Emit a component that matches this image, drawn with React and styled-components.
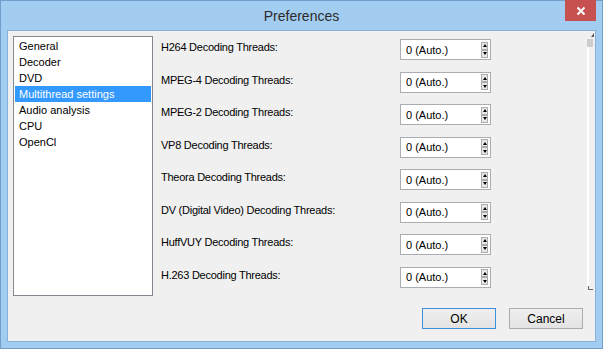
import React from 'react'
import styled, { createGlobalStyle } from 'styled-components'

const GlobalStyle = createGlobalStyle`
  html, body {
    margin: 0;
    padding: 0;
    overflow: hidden;
    background: #a3cdf0;
  }
  body {
    font-family: "Liberation Sans", Arial, sans-serif;
  }
`

const categories = ['General', 'Decoder', 'DVD', 'Multithread settings', 'Audio analysis', 'CPU', 'OpenCl']

const threads = [
  'H264 Decoding Threads:',
  'MPEG-4 Decoding Threads:',
  'MPEG-2 Decoding Threads:',
  'VP8 Decoding Threads:',
  'Theora Decoding Threads:',
  'DV (Digital Video) Decoding Threads:',
  'HuffVUY Decoding Threads:',
  'H.263 Decoding Threads:',
]

const Preferences = () => {
  return (
    <Window>
      <TitleBar>
        Preferences
        <CloseButton>
          <svg width="10" height="10" viewBox="0 0 10 10">
            <path d="M1.5 1.5 L8.5 8.5 M8.5 1.5 L1.5 8.5" stroke="#fff" strokeWidth="2" />
          </svg>
        </CloseButton>
      </TitleBar>
      <Client>
        <Main>
          <CategoryList>
            {categories.map(c => (
              <CategoryItem key={c} selected={c === 'Multithread settings'}>{c}</CategoryItem>
            ))}
          </CategoryList>
          <ScrollPane>
            <Rows>
              {threads.map(t => (
                <Row key={t}>
                  <Label>{t}</Label>
                  <Spinner>
                    <SpinValue>0 (Auto.)</SpinValue>
                    <SpinButtons>
                      <SpinButton up />
                      <SpinButton />
                    </SpinButtons>
                  </Spinner>
                </Row>
              ))}
            </Rows>
            <ScrollBar>
              <ScrollArrow />
              <ScrollThumb />
              <ScrollTrack />
              <ScrollGrip />
            </ScrollBar>
          </ScrollPane>
        </Main>
        <Footer>
          <DialogButton primary>OK</DialogButton>
          <DialogButton>Cancel</DialogButton>
        </Footer>
      </Client>
    </Window>
  )
}

const Window = styled.div`
  width: 603px;
  height: 349px;
  box-sizing: border-box;
  border: 1px solid #6f9fcb;
  background: #a3cdf0;
  padding: 0 6px 6px;
  display: flex;
  flex-direction: column;
`

const TitleBar = styled.div`
  position: relative;
  height: 29px;
  display: flex;
  align-items: center;
  justify-content: center;
  font-size: 14px;
  color: #2a2a2a;
`

const CloseButton = styled.div`
  position: absolute;
  top: -1px;
  right: 0;
  width: 31px;
  height: 21px;
  background: #c75050;
  display: flex;
  align-items: center;
  justify-content: center;
`

const Client = styled.div`
  flex: 1;
  border: 1px solid #86b2da;
  background: #f0f0f0;
  display: flex;
  flex-direction: column;
  font-size: 11px;
  color: #000;
`

const Main = styled.div`
  display: flex;
  height: 265px;
  padding-left: 5px;
`

const CategoryList = styled.div`
  width: 140px;
  height: 260px;
  margin-top: 5px;
  box-sizing: border-box;
  border: 1px solid #828790;
  background: #fff;
  padding: 1px 1px 0 1px;
`

const CategoryItem = styled.div`
  height: 16px;
  line-height: 16px;
  padding-left: 4px;
  white-space: nowrap;
  background: ${p => (p.selected ? '#3399ff' : 'transparent')};
  color: ${p => (p.selected ? '#fff' : '#000')};
`

const ScrollPane = styled.div`
  flex: 1;
  display: flex;
  padding-left: 8px;
`

const Rows = styled.div`
  flex: 1;
  padding-top: 8px;
`

const Row = styled.div`
  height: 32.57px;
  display: grid;
  grid-template-columns: 239px 91px;
  align-items: start;
`

const Label = styled.div`
  padding-top: 1px;
  line-height: 14px;
  letter-spacing: -0.25px;
  white-space: nowrap;
`

const Spinner = styled.div`
  width: 91px;
  height: 21px;
  box-sizing: border-box;
  border: 1px solid #abadb3;
  background: #fff;
  display: flex;
  align-items: center;
  justify-content: space-between;
  padding: 0 1px 0 5px;
`

const SpinValue = styled.span`
  line-height: 14px;
`

const SpinButtons = styled.div`
  display: flex;
  flex-direction: column;
  margin-right: 1px;
`

const SpinButton = styled.div`
  width: 7px;
  height: 8px;
  box-sizing: border-box;
  border: 1px solid #acacac;
  background: #e8e8e8;
  display: flex;
  align-items: center;
  justify-content: center;
  &::after {
    content: '';
    border-left: 2.5px solid transparent;
    border-right: 2.5px solid transparent;
    ${p => (p.up ? 'border-bottom: 3px solid #000;' : 'border-top: 3px solid #000;')}
  }
`

const ScrollBar = styled.div`
  width: 7px;
  margin-right: 1px;
  padding-top: 2px;
  display: flex;
  flex-direction: column;
  align-items: flex-start;
`

const ScrollArrow = styled.div`
  align-self: flex-end;
  width: 0;
  height: 0;
  border-left: 3px solid transparent;
  border-bottom: 4px solid #555;
  margin-bottom: 2px;
`

const ScrollThumb = styled.div`
  width: 6px;
  height: 8px;
  background: #cdcdcd;
`

const ScrollTrack = styled.div`
  width: 2px;
  height: 239px;
  background: #fff;
`

const ScrollGrip = styled.div`
  width: 4px;
  height: 3px;
  margin-left: 1px;
  border-left: 1px solid #666;
  border-bottom: 1px solid #666;
`

const Footer = styled.div`
  display: flex;
  justify-content: flex-end;
  gap: 13px;
  padding: 12px 12px 0 0;
`

const DialogButton = styled.div`
  width: 74px;
  height: 21px;
  box-sizing: border-box;
  border: 1px solid ${p => (p.primary ? '#3c8fe0' : '#acacac')};
  background: linear-gradient(#efefef, #e3e3e3);
  display: flex;
  align-items: center;
  justify-content: center;
  font-size: 12px;
`

export default function App() {
  return (
    <>
      <GlobalStyle />
      <Preferences />
    </>
  )
}
